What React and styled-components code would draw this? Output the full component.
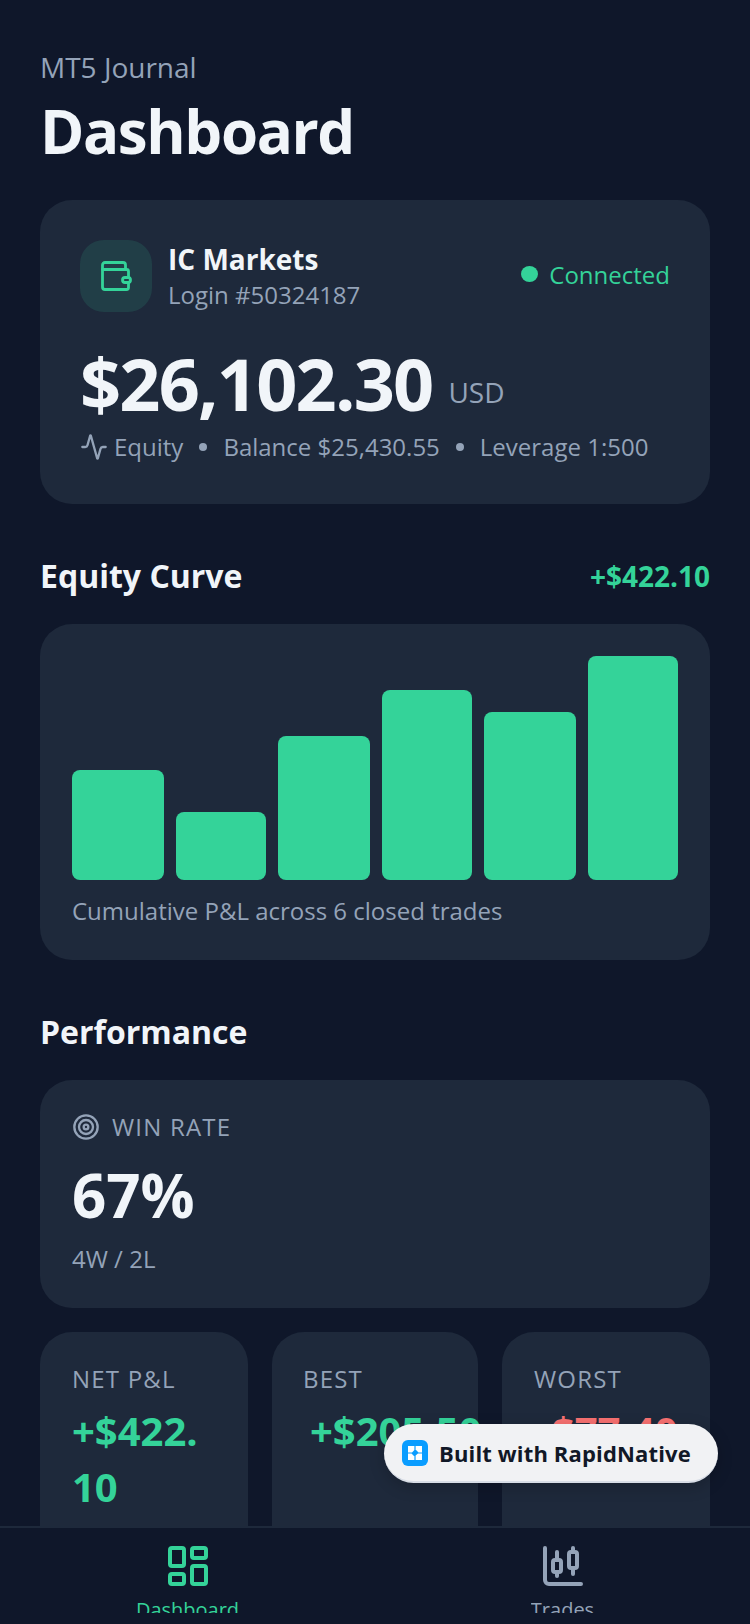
import styled, { createGlobalStyle } from "styled-components";
import { Activity, Target, LayoutDashboard, ChartCandlestick } from "lucide-react";

const GlobalStyle = createGlobalStyle`
  html, body {
    margin: 0;
    padding: 0;
    background: #0f172a;
  }
  * {
    box-sizing: border-box;
  }
`;

const bars = [
  { height: 110, width: 92 },
  { height: 68, width: 90 },
  { height: 144, width: 92 },
  { height: 190, width: 90 },
  { height: 168, width: 92 },
  { height: 224, width: 90 },
];

const WalletIcon = () => (
  <svg width="36" height="36" viewBox="0 0 36 36" fill="none" stroke="#34d399" strokeWidth="2.800" strokeLinecap="round" strokeLinejoin="round">
    <path d="M27.500 11.500V7a2.500 2.500 0 0 0-2.500-2.500H7A2.500 2.500 0 0 0 4.500 7v22A2.500 2.500 0 0 0 7 31.500h21.500a2 2 0 0 0 2-2V25" />
    <path d="M4.500 11.500h24a2 2 0 0 1 2 2V19.500" />
    <rect x="24.500" y="19.500" width="8" height="5" rx="2.500" />
  </svg>
);

const App = () => {
  return (
    <Screen>
      <GlobalStyle />
      <Scroll>
        <Eyebrow>MT5 Journal</Eyebrow>
        <Title>Dashboard</Title>

        <AccountCard>
          <AccountTop>
            <IconTile>
              <WalletIcon />
            </IconTile>
            <AccountNames>
              <Broker>IC Markets</Broker>
              <Login>Login #50324187</Login>
            </AccountNames>
            <Status>
              <StatusDot />
              Connected
            </Status>
          </AccountTop>
          <BalanceRow>
            <Amount>$26,102.30</Amount>
            <Currency>USD</Currency>
          </BalanceRow>
          <MetaRow>
            <Activity size={28} strokeWidth={2} />
            <span>Equity</span>
            <MetaDot />
            <span>Balance $25,430.55</span>
            <MetaDot />
            <span>Leverage 1:500</span>
          </MetaRow>
        </AccountCard>

        <SectionHead>
          <SectionTitle>Equity Curve</SectionTitle>
          <Gain>+$422.10</Gain>
        </SectionHead>
        <ChartCard>
          <Bars>
            {bars.map((bar, index) => (
              <Bar key={index} $height={bar.height} $width={bar.width} />
            ))}
          </Bars>
          <ChartNote>Cumulative P&amp;L across 6 closed trades</ChartNote>
        </ChartCard>

        <SectionHead>
          <SectionTitle>Performance</SectionTitle>
        </SectionHead>
        <WinCard>
          <WinLabel>
            <Target size={28} strokeWidth={2} />
            WIN RATE
          </WinLabel>
          <WinValue>67%</WinValue>
          <WinNote>4W / 2L</WinNote>
        </WinCard>

        <Stats>
          <StatCard>
            <StatLabel>NET P&amp;L</StatLabel>
            <StatValue $color="#34d399">+$422.10</StatValue>
          </StatCard>
          <StatCard $pad={31}>
            <StatLabel>BEST</StatLabel>
            <StatValue $color="#34d399" $nowrap $shift={7}>+$205.50</StatValue>
          </StatCard>
          <StatCard>
            <StatLabel>WORST</StatLabel>
            <StatValue $color="#f87171" $nowrap $shift={5}>-$77.40</StatValue>
          </StatCard>
        </Stats>
      </Scroll>

      <Badge>
        <BadgeLogo>
          <svg width="16" height="16" viewBox="0 0 16 16" fill="#fff">
            <path d="M1 1h6.400v4L5 7.400H1z" />
            <path d="M8.600 1H15v6.400h-3.500L8.600 4.500z" />
            <path d="M1 8.600h3.500l2.900 2.900V15H1z" />
            <path d="M8.600 10.500 11 8.600h4V15H8.600z" />
          </svg>
        </BadgeLogo>
        Built with RapidNative
      </Badge>

      <TabBar>
        <Tab $active>
          <LayoutDashboard size={48} strokeWidth={2} />
          <TabLabel>Dashboard</TabLabel>
        </Tab>
        <Tab>
          <ChartCandlestick size={48} strokeWidth={2} />
          <TabLabel>Trades</TabLabel>
        </Tab>
      </TabBar>
    </Screen>
  );
};

export default App;

const Screen = styled.div`
  position: relative;
  display: flex;
  flex-direction: column;
  width: 750px;
  height: 1624px;
  overflow: hidden;
  background: #0f172a;
  font-family: "Open Sans", "Noto Sans", sans-serif;
`;

const Scroll = styled.main`
  flex: 1;
  min-height: 0;
  overflow: hidden;
  padding: 47px 40px 0;
`;

const Eyebrow = styled.div`
  font-size: 28px;
  line-height: 40px;
  color: #94a3b8;
`;

const Title = styled.h1`
  margin: 7px 0 0;
  font-size: 60px;
  line-height: 75px;
  font-weight: 700;
  letter-spacing: -1.4px;
  color: #f1f5f9;
`;

const Card = styled.section`
  background: #1e293b;
  border-radius: 32px;
`;

const AccountCard = styled(Card)`
  margin-top: 31px;
  height: 304px;
  padding: 40px;
`;

const AccountTop = styled.div`
  display: flex;
  align-items: center;
  gap: 16px;
`;

const IconTile = styled.div`
  display: flex;
  align-items: center;
  justify-content: center;
  width: 72px;
  height: 72px;
  border-radius: 24px;
  background: rgba(52, 211, 153, 0.13);
`;

const AccountNames = styled.div`
  flex: 1;
  align-self: flex-start;
`;

const Broker = styled.div`
  font-size: 28px;
  line-height: 38px;
  font-weight: 700;
  color: #f1f5f9;
`;

const Login = styled.div`
  font-size: 24px;
  line-height: 33px;
  color: #94a3b8;
`;

const Status = styled.div`
  display: flex;
  align-items: center;
  gap: 11px;
  margin-bottom: 4px;
  font-size: 24px;
  color: #34d399;
`;

const StatusDot = styled.span`
  width: 17px;
  height: 16px;
  border-radius: 50%;
  background: #34d399;
`;

const BalanceRow = styled.div`
  display: flex;
  align-items: flex-end;
  gap: 16px;
  margin-top: 27px;
`;

const Amount = styled.div`
  font-size: 72px;
  line-height: 88px;
  font-weight: 700;
  letter-spacing: -1.8px;
  color: #f1f5f9;
`;

const Currency = styled.div`
  margin-bottom: 16px;
  font-size: 28px;
  line-height: 38px;
  color: #94a3b8;
`;

const MetaRow = styled.div`
  display: flex;
  align-items: center;
  gap: 6px;
  margin-top: 4px;
  font-size: 24px;
  line-height: 32px;
  color: #94a3b8;
`;

const MetaDot = styled.span`
  width: 8px;
  height: 8px;
  margin: 0 10px;
  border-radius: 50%;
  background: #94a3b8;
`;

const SectionHead = styled.div`
  display: flex;
  align-items: center;
  justify-content: space-between;
  margin-top: 50px;
  margin-bottom: 26px;
`;

const SectionTitle = styled.h2`
  margin: 0;
  font-size: 32px;
  line-height: 44px;
  font-weight: 700;
  color: #f1f5f9;
`;

const Gain = styled.div`
  font-size: 28px;
  font-weight: 700;
  color: #34d399;
`;

const ChartCard = styled(Card)`
  height: 336px;
  padding: 32px;
`;

const Bars = styled.div`
  display: flex;
  align-items: flex-end;
  justify-content: space-between;
  height: 224px;
`;

const Bar = styled.div`
  width: ${(props) => props.$width}px;
  height: ${(props) => props.$height}px;
  border-radius: 8px;
  background: #34d399;
`;

const ChartNote = styled.div`
  margin-top: 15px;
  font-size: 24px;
  line-height: 32px;
  color: #94a3b8;
`;

const WinCard = styled(Card)`
  height: 228px;
  padding: 31px 32px 32px;
`;

const WinLabel = styled.div`
  display: flex;
  align-items: center;
  gap: 12px;
  font-size: 24px;
  line-height: 32px;
  letter-spacing: 1.2px;
  color: #94a3b8;
`;

const WinValue = styled.div`
  margin-top: 14px;
  font-size: 60px;
  line-height: 76px;
  font-weight: 700;
  color: #f1f5f9;
`;

const WinNote = styled.div`
  margin-top: 10px;
  font-size: 24px;
  line-height: 32px;
  color: #94a3b8;
`;

const Stats = styled.div`
  display: grid;
  grid-template-columns: 208px 206px 208px;
  gap: 24px;
  margin-top: 24px;
`;

const StatCard = styled(Card)`
  height: 240px;
  padding: 31px ${(props) => props.$pad || 32}px;
`;

const StatLabel = styled.div`
  font-size: 24px;
  line-height: 32px;
  letter-spacing: 1.2px;
  color: #94a3b8;
`;

const StatValue = styled.div`
  margin-top: 8px;
  margin-left: ${(props) => props.$shift || 0}px;
  font-size: 40px;
  line-height: 56px;
  font-weight: 700;
  overflow-wrap: anywhere;
  white-space: ${(props) => (props.$nowrap ? "nowrap" : "normal")};
  color: ${(props) => props.$color};
`;

const Badge = styled.div`
  position: absolute;
  left: 384px;
  top: 1424px;
  display: flex;
  align-items: center;
  gap: 11px;
  width: 334px;
  height: 59px;
  padding-left: 18px;
  border-radius: 30px;
  border-bottom: 2px solid #d8dde6;
  background: #f1f2f4;
  box-shadow: 0 4px 16px rgba(0, 0, 0, 0.2);
  font-size: 22px;
  font-weight: 700;
  letter-spacing: 0.15px;
  color: #111827;
`;

const BadgeLogo = styled.span`
  display: flex;
  align-items: center;
  justify-content: center;
  width: 26px;
  height: 26px;
  border-radius: 6px;
  background: #0a9dff;
`;

const TabBar = styled.nav`
  display: flex;
  flex-shrink: 0;
  height: 98px;
  border-top: 2px solid #1e293b;
  background: #0f172a;
`;

const Tab = styled.div`
  flex: 1;
  display: flex;
  flex-direction: column;
  align-items: center;
  gap: 4px;
  padding-top: 14px;
  color: ${(props) => (props.$active ? "#34d399" : "#94a3b8")};
`;

const TabLabel = styled.div`
  height: 19px;
  overflow: hidden;
  font-size: 20px;
  line-height: 32px;
`;
